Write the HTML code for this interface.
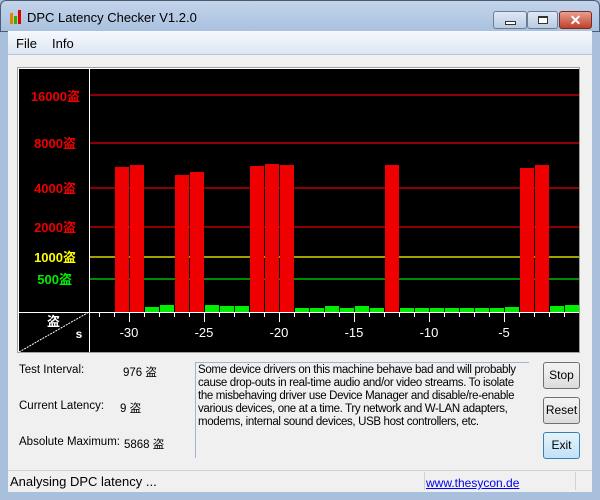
<!DOCTYPE html>
<html><head><style>
*{margin:0;padding:0;box-sizing:border-box}
body{width:600px;height:500px;overflow:hidden;font-family:"Liberation Sans","Noto Sans CJK SC",sans-serif;font-size:12px;background:#a9c0dc;position:relative}
.abs{position:absolute}
.tb{left:0;top:0;width:600px;height:32px;background:linear-gradient(#c3d4ea,#a9c1df);border-radius:6px 6px 0 0;border:1px solid #4a5b72}
.btn{border:1px solid #6a7d97;border-radius:3px;background:linear-gradient(#dfe8f4,#b9cbe2)}
.wb{font-size:12px;color:#000;background:linear-gradient(#f4f4f4,#dcdcdc);border:1px solid #707070;border-radius:3px;text-align:center;line-height:25px}
.lb{font-size:11.5px}
</style></head><body>
<div class="abs tb"></div>
<div class="abs" style="left:10px;top:10px;width:14px;height:14px;">
<div class="abs" style="left:0;top:3px;width:3px;height:11px;background:#e88000"></div>
<div class="abs" style="left:4px;top:6px;width:3px;height:8px;background:#30b000"></div>
<div class="abs" style="left:8px;top:0;width:3px;height:14px;background:#e00000"></div>
</div>
<div class="abs" style="left:27px;top:10px;font-size:13px;color:#000">DPC Latency Checker V1.2.0</div>
<div class="abs btn" style="left:493px;top:11px;width:34px;height:18px"><div class="abs" style="left:11px;top:9px;width:11px;height:4px;border:1px solid #333;background:#fff"></div></div>
<div class="abs btn" style="left:527px;top:11px;width:31px;height:18px"><div class="abs" style="left:10px;top:4px;width:10px;height:8px;border:1px solid #333;border-top-width:2px;background:#fff"></div></div>
<div class="abs" style="left:559px;top:11px;width:33px;height:18px;border:1px solid #7a2a20;border-radius:3px;background:linear-gradient(#e8a090,#c0402c);color:#fff;font-weight:bold;text-align:center;line-height:16px;font-size:14px">✕</div>
<div class="abs" style="left:8px;top:31px;width:584px;height:461px;background:#f0f0f0"></div>
<div class="abs" style="left:8px;top:31px;width:584px;height:24px;background:linear-gradient(#f6f9fd,#dde6f3);border-bottom:1px solid #b5c4d8"></div>
<div class="abs" style="left:16px;top:36px;font-size:13px">File</div>
<div class="abs" style="left:52px;top:36px;font-size:13px">Info</div>
<div class="abs" style="left:17px;top:67px;width:563px;height:286px;border:1px solid #a0a0a0;background:#fff"></div>
<svg class="abs" style="left:19px;top:69px" width="560" height="283" viewBox="19 69 560 283">
<rect x="19" y="69" width="560" height="283" fill="#000"/>
<g stroke-width="1.2">
<line x1="89" y1="95" x2="579" y2="95" stroke="#e00000"/>
<line x1="89" y1="143" x2="579" y2="143" stroke="#e00000"/>
<line x1="89" y1="188" x2="579" y2="188" stroke="#e00000"/>
<line x1="89" y1="227" x2="579" y2="227" stroke="#e00000"/>
<line x1="89" y1="257" x2="579" y2="257" stroke="#ffff00"/>
<line x1="89" y1="279" x2="579" y2="279" stroke="#00e000"/>
</g>
<g>
<rect x="115" y="167" width="14" height="145" fill="#ee0000"/>
<rect x="130" y="165" width="14" height="147" fill="#ee0000"/>
<rect x="145" y="307" width="14" height="5" fill="#00ee00"/>
<rect x="160" y="305" width="14" height="7" fill="#00ee00"/>
<rect x="175" y="175" width="14" height="137" fill="#ee0000"/>
<rect x="190" y="172" width="14" height="140" fill="#ee0000"/>
<rect x="205" y="305" width="14" height="7" fill="#00ee00"/>
<rect x="220" y="306" width="14" height="6" fill="#00ee00"/>
<rect x="235" y="306" width="14" height="6" fill="#00ee00"/>
<rect x="250" y="166" width="14" height="146" fill="#ee0000"/>
<rect x="265" y="164" width="14" height="148" fill="#ee0000"/>
<rect x="280" y="165" width="14" height="147" fill="#ee0000"/>
<rect x="295" y="308" width="14" height="4" fill="#00ee00"/>
<rect x="310" y="308" width="14" height="4" fill="#00ee00"/>
<rect x="325" y="306" width="14" height="6" fill="#00ee00"/>
<rect x="340" y="308" width="14" height="4" fill="#00ee00"/>
<rect x="355" y="306" width="14" height="6" fill="#00ee00"/>
<rect x="370" y="308" width="14" height="4" fill="#00ee00"/>
<rect x="385" y="165" width="14" height="147" fill="#ee0000"/>
<rect x="400" y="308" width="14" height="4" fill="#00ee00"/>
<rect x="415" y="308" width="14" height="4" fill="#00ee00"/>
<rect x="430" y="308" width="14" height="4" fill="#00ee00"/>
<rect x="445" y="308" width="14" height="4" fill="#00ee00"/>
<rect x="460" y="308" width="14" height="4" fill="#00ee00"/>
<rect x="475" y="308" width="14" height="4" fill="#00ee00"/>
<rect x="490" y="308" width="14" height="4" fill="#00ee00"/>
<rect x="505" y="307" width="14" height="5" fill="#00ee00"/>
<rect x="520" y="168" width="14" height="144" fill="#ee0000"/>
<rect x="535" y="165" width="14" height="147" fill="#ee0000"/>
<rect x="550" y="306" width="14" height="6" fill="#00ee00"/>
<rect x="565" y="305" width="14" height="7" fill="#00ee00"/>
</g>
<line x1="89.5" y1="69" x2="89.5" y2="352" stroke="#fff"/>
<line x1="19" y1="312.5" x2="579" y2="312.5" stroke="#fff"/>
<line x1="19" y1="352" x2="89" y2="312" stroke="#fff" stroke-dasharray="2,1"/>
<g stroke="#fff">
<line x1="99.5" y1="312" x2="99.5" y2="317"/><line x1="114.5" y1="312" x2="114.5" y2="317"/><line x1="129.5" y1="312" x2="129.5" y2="322"/>
<line x1="144.5" y1="312" x2="144.5" y2="317"/><line x1="159.5" y1="312" x2="159.5" y2="317"/><line x1="174.5" y1="312" x2="174.5" y2="317"/><line x1="189.5" y1="312" x2="189.5" y2="317"/><line x1="204.5" y1="312" x2="204.5" y2="322"/>
<line x1="219.5" y1="312" x2="219.5" y2="317"/><line x1="234.5" y1="312" x2="234.5" y2="317"/><line x1="249.5" y1="312" x2="249.5" y2="317"/><line x1="264.5" y1="312" x2="264.5" y2="317"/><line x1="279.5" y1="312" x2="279.5" y2="322"/>
<line x1="294.5" y1="312" x2="294.5" y2="317"/><line x1="309.5" y1="312" x2="309.5" y2="317"/><line x1="324.5" y1="312" x2="324.5" y2="317"/><line x1="339.5" y1="312" x2="339.5" y2="317"/><line x1="354.5" y1="312" x2="354.5" y2="322"/>
<line x1="369.5" y1="312" x2="369.5" y2="317"/><line x1="384.5" y1="312" x2="384.5" y2="317"/><line x1="399.5" y1="312" x2="399.5" y2="317"/><line x1="414.5" y1="312" x2="414.5" y2="317"/><line x1="429.5" y1="312" x2="429.5" y2="322"/>
<line x1="444.5" y1="312" x2="444.5" y2="317"/><line x1="459.5" y1="312" x2="459.5" y2="317"/><line x1="474.5" y1="312" x2="474.5" y2="317"/><line x1="489.5" y1="312" x2="489.5" y2="317"/><line x1="504.5" y1="312" x2="504.5" y2="322"/>
<line x1="519.5" y1="312" x2="519.5" y2="317"/><line x1="534.5" y1="312" x2="534.5" y2="317"/><line x1="549.5" y1="312" x2="549.5" y2="317"/><line x1="564.5" y1="312" x2="564.5" y2="317"/>
</g>
<g font-family="Liberation Sans, sans-serif" font-size="13" fill="#fff" text-anchor="middle">
<text x="129" y="337">-30</text><text x="204" y="337">-25</text><text x="279" y="337">-20</text><text x="354" y="337">-15</text><text x="429" y="337">-10</text><text x="504" y="337">-5</text>
<text x="79" y="338" font-size="12" font-weight="bold">s</text>
</g>
<g font-family="Liberation Sans, Noto Sans CJK SC, sans-serif" font-size="13" font-weight="bold" text-anchor="end">
<text x="80" y="101" fill="#ee0000">16000盗</text>
<text x="76" y="148" fill="#ee0000">8000盗</text>
<text x="76" y="193" fill="#ee0000">4000盗</text>
<text x="76" y="232" fill="#ee0000">2000盗</text>
<text x="76" y="262" fill="#ffff00">1000盗</text>
<text x="72" y="284" fill="#00ee00">500盗</text>
<text x="60" y="326" fill="#fff">盗</text>
</g>
</svg>
<div class="abs lb" style="left:19px;top:364px">Test Interval:</div>
<div class="abs lb" style="left:123px;top:364px">976 盗</div>
<div class="abs lb" style="left:19px;top:400px">Current Latency:</div>
<div class="abs lb" style="left:120px;top:400px">9 盗</div>
<div class="abs lb" style="left:19px;top:436px">Absolute Maximum:</div>
<div class="abs lb" style="left:124px;top:436px">5868 盗</div>
<div class="abs" style="left:195px;top:362px;width:334px;height:96px;border-left:1px solid #a0b4cc;border-top:1px solid #a0b4cc;padding:1px 2px;line-height:13px;font-size:11.5px;letter-spacing:-0.35px;white-space:nowrap;overflow:hidden">Some device drivers on this machine behave bad and will probably<br>cause drop-outs in real-time audio and/or video streams. To isolate<br>the misbehaving driver use Device Manager and disable/re-enable<br>various devices, one at a time. Try network and W-LAN adapters,<br>modems, internal sound devices, USB host controllers, etc.</div>
<div class="abs wb" style="left:543px;top:362px;width:37px;height:27px">Stop</div>
<div class="abs wb" style="left:543px;top:397px;width:37px;height:27px">Reset</div>
<div class="abs wb" style="left:543px;top:432px;width:37px;height:27px;border-color:#3c7fb1;background:linear-gradient(#e5f4fc,#bfe2f6)">Exit</div>
<div class="abs" style="left:8px;top:470px;width:584px;height:22px;border-top:1px solid #d0d0d0;background:#f0f0f0"></div>
<div class="abs" style="left:10px;top:474px;font-size:13px">Analysing DPC latency ...</div>
<div class="abs" style="left:424px;top:472px;width:1px;height:18px;background:#d0d0d0"></div>
<div class="abs" style="left:426px;top:476px;color:#0000ee;text-decoration:underline;font-size:12px">www.thesycon.de</div>
<div class="abs" style="left:575px;top:472px;width:1px;height:18px;background:#d0d0d0"></div>
</body></html>
